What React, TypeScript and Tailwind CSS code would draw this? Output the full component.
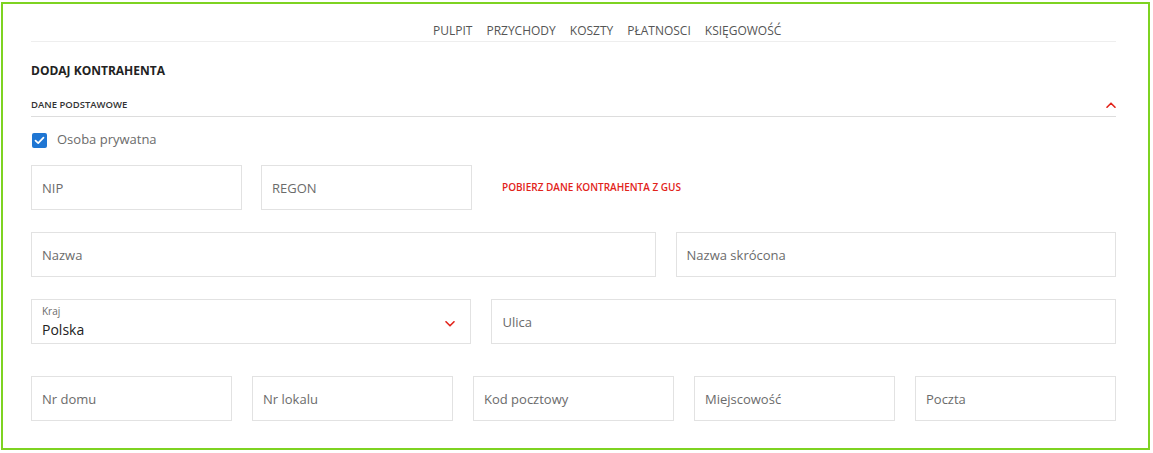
import type { ReactNode } from 'react'

const NAV = ['PULPIT', 'PRZYCHODY', 'KOSZTY', 'PŁATNOSCI', 'KSIĘGOWOŚĆ']

function Field({ placeholder, className = '' }: { placeholder: string; className?: string }) {
  return (
    <input
      type="text"
      placeholder={placeholder}
      className={`h-[45px] border border-[#e2e2e2] bg-white px-[10px] text-[13px] text-[#333] outline-none placeholder:text-[#6b6b6b] ${className}`}
    />
  )
}

function Chevron({ up = false }: { up?: boolean }) {
  return (
    <svg width="10" height="6" viewBox="0 0 10 6" fill="none" className="block">
      <path
        d={up ? 'M1 5.2 L5 1.2 L9 5.2' : 'M1 0.8 L5 4.8 L9 0.8'}
        stroke="#e2231a"
        strokeWidth="1.6"
        strokeLinecap="round"
        strokeLinejoin="round"
      />
    </svg>
  )
}

function Row({ children, className = '' }: { children: ReactNode; className?: string }) {
  return <div className={className}>{children}</div>
}

export default function App() {
  return (
    <div className="ml-[1px] mt-[2px] h-[448px] w-[1149px] border-2 border-[#7ed321] bg-white pl-[28px] pr-[32px] font-['Open_Sans',sans-serif]">
      {/* menu */}
      <nav className="flex gap-[14px] border-b border-[#eeeeee] pb-[2px] pl-[402px] pt-[19px] text-[12px] leading-4 text-[#555]">
        {NAV.map((n) => (
          <span key={n}>{n}</span>
        ))}
      </nav>

      <h1 className="mt-[21px] text-[12px] font-bold leading-4 text-[#222]">DODAJ KONTRAHENTA</h1>

      <div className="mt-[19px] flex items-center justify-between border-b border-[#dddddd] pb-[5px]">
        <span className="text-[9.5px] font-semibold leading-[13px] text-[#333]">DANE PODSTAWOWE</span>
        <Chevron up />
      </div>

      <label className="mt-[14px] ml-[1px] flex h-[18px] items-center gap-[10px]">
        <span className="flex h-[15px] w-[15px] items-center justify-center rounded-[2px] bg-[#1f76d3]">
          <svg width="11" height="9" viewBox="0 0 11 9" fill="none">
            <path d="M1.5 4.6 L4.2 7.2 L9.5 1.6" stroke="#fff" strokeWidth="1.7" strokeLinecap="round" strokeLinejoin="round" />
          </svg>
        </span>
        <span className="text-[13px] text-[#6b6b6b]">Osoba prywatna</span>
      </label>

      <Row className="mt-[16px] flex items-center gap-[19px]">
        <Field placeholder="NIP" className="w-[211px]" />
        <Field placeholder="REGON" className="w-[211px]" />
        <span className="ml-[11px] text-[10px] font-semibold text-[#e2231a]">POBIERZ DANE KONTRAHENTA Z GUS</span>
      </Row>

      <Row className="mt-[22px] grid grid-cols-12 gap-x-[20px]">
        <Field placeholder="Nazwa" className="col-span-7 w-full" />
        <Field placeholder="Nazwa skrócona" className="col-span-5 w-full" />
      </Row>

      <Row className="mt-[22px] grid grid-cols-12 gap-x-[20px]">
        <div className="col-span-5 flex h-[45px] items-start justify-between border border-[#e2e2e2] pl-[10px] pr-[15px] pt-[5px]">
          <div>
            <div className="text-[10px] leading-[13px] text-[#6b6b6b]">Kraj</div>
            <div className="mt-[2px] text-[14px] leading-[19px] text-[#222]">Polska</div>
          </div>
          <div className="mt-[16px]">
            <Chevron />
          </div>
        </div>
        <Field placeholder="Ulica" className="col-span-7 w-full" />
      </Row>

      <Row className="mt-[32px] grid grid-cols-5 gap-x-[20px]">
        <Field placeholder="Nr domu" className="w-full" />
        <Field placeholder="Nr lokalu" className="w-full" />
        <Field placeholder="Kod pocztowy" className="w-full" />
        <Field placeholder="Miejscowość" className="w-full" />
        <Field placeholder="Poczta" className="w-full" />
      </Row>
    </div>
  )
}
